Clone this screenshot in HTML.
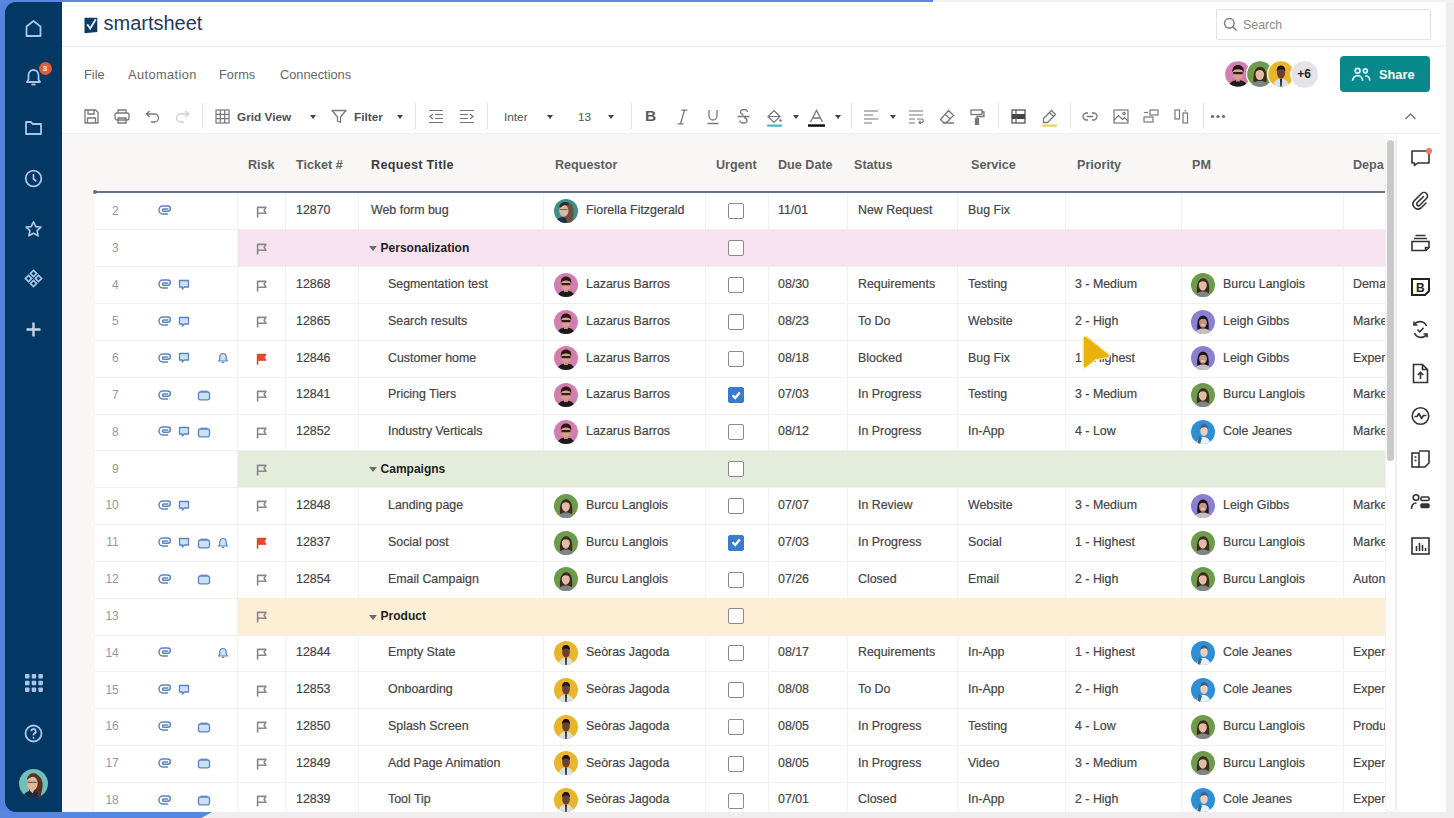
<!DOCTYPE html>
<html><head><meta charset="utf-8">
<style>
*{margin:0;padding:0;box-sizing:border-box}
html,body{width:1454px;height:818px;overflow:hidden}
body{position:relative;background:#efedee;font-family:"Liberation Sans",sans-serif;color:#333}
.abs{position:absolute}
#topband{position:absolute;left:0;top:0;width:933px;height:3px;background:#5a88e0}
#topgrey{position:absolute;left:933px;top:0;width:521px;height:3px;background:#f3f2f2}
#botband{position:absolute;left:0;top:811px;width:214px;height:7px;background:#5886de;clip-path:polygon(0 0,100% 0,94% 100%,0 100%)}
#leftband{position:absolute;left:0;top:0;width:62px;height:818px;background:#5584dc}
#side{position:absolute;left:5px;top:2px;width:60px;height:810px;background:#033764;border-radius:11px 0 0 11px}
#main{position:absolute;left:62px;top:2px;width:1384px;height:810px;background:#fff;overflow:hidden}
.hdrline{position:absolute;left:62px;top:46px;width:1384px;height:1px;background:#ececec}
.menu{position:absolute;top:66.5px;font-size:12.8px;color:#666}
.tb{position:absolute;top:109px}
.tbt{position:absolute;top:110px;font-size:11.8px;color:#505050;font-weight:bold}
.sep{position:absolute;top:103px;width:1px;height:26px;background:#e3e3e3}
.dd{position:absolute;top:115px;width:0;height:0;border-left:3.5px solid transparent;border-right:3.5px solid transparent;border-top:4.5px solid #444}
#gridbg{position:absolute;left:62px;top:134px;width:1331px;height:678px;background:#f8f7f5}
.hd{position:absolute;top:157.5px;font-size:12.6px;font-weight:bold;color:#5e5e5e}
#blueline{position:absolute;left:95px;top:191.3px;width:1289.5px;height:2px;background:#62718f}
#rowsbg{position:absolute;left:95px;top:192px;width:1289.5px;height:620px;background:#fff}
#clip{position:absolute;left:0;top:0;width:1384.5px;height:812px;overflow:hidden}
#clip > *{position:absolute}
.rn{position:absolute;left:62px;width:56.8px;text-align:right;font-size:12px;color:#979797}
.grp{position:absolute;left:237.5px;width:1200px}
.ic{position:absolute}
.flag{left:255.3px;width:12px;height:12px}
.t{position:absolute;font-size:12.4px;color:#454545;white-space:nowrap;-webkit-text-stroke:0.2px #454545}
.gt{position:absolute;left:369px;font-size:12px;font-weight:bold;color:#222;white-space:nowrap}
.tri{display:inline-block;width:0;height:0;border-left:4px solid transparent;border-right:4px solid transparent;border-top:5px solid #6f6a70;margin-right:3.6px;vertical-align:0.5px}
.cb{position:absolute;left:728px;width:16px;height:16px;border:1.5px solid #8a8a8a;border-radius:2px;background:#fff}
.cb.on{background:#3a7cc9;border-color:#3a7cc9}
.cb svg{position:absolute;left:-1.5px;top:-1.5px;width:16px;height:16px}
.av{position:absolute}
.hl{position:absolute;left:95px;width:1300px;height:1px;background:#efefef}
.vl{position:absolute;top:192px;width:1px;height:620px;background:#f1f1f1}
.rpi{position:absolute;left:1410px}
.sbi{position:absolute;left:23px}
</style></head><body>
<svg width="0" height="0" style="position:absolute">
<defs>
<symbol id="att" viewBox="0 0 14 12"><path d="M9.5 10H4.6A3.6 4 0 0 1 4.6 2h5.2a2.6 2.6 0 0 1 0 5.2H5.6a1.1 1.1 0 0 1 0-2.2h4.2" fill="none" stroke="#5a84c0" stroke-width="1.5" stroke-linecap="round"/></symbol>
<symbol id="cmt" viewBox="0 0 12 12"><path d="M1.5 1.5h9v6.5H6.3L4.3 10V8H1.5z" fill="#cfe0f5" stroke="#5a84c0" stroke-width="1.3" stroke-linejoin="round"/></symbol>
<symbol id="prf" viewBox="0 0 14 12"><rect x="1.5" y="3" width="11" height="7.8" rx="1.8" fill="#cfe0f5" stroke="#5a84c0" stroke-width="1.3"/><path d="M3.5 2.2h7" stroke="#5a84c0" stroke-width="1.2"/></symbol>
<symbol id="bel" viewBox="0 0 12 12"><path d="M6 1.5a3.2 3.2 0 0 0-3.2 3.2v2.6L1.6 9h8.8L9.2 7.3V4.7A3.2 3.2 0 0 0 6 1.5z" fill="#cfe0f5" stroke="#5a84c0" stroke-width="1.2" stroke-linejoin="round"/><path d="M4.8 10.4h2.4" stroke="#5a84c0" stroke-width="1.2"/></symbol>
<symbol id="flag" viewBox="0 0 12 12"><path d="M2.6 11.6V0.8M2.6 1.4h8.3L9.1 4.3l1.8 2.9H2.6" fill="none" stroke="#888" stroke-width="1.6" stroke-linejoin="round"/></symbol>
<symbol id="flagr" viewBox="0 0 12 12"><path d="M2.6 11.6V0.8" stroke="#c8503a" stroke-width="1.6"/><path d="M2.6 1.4h8.3L9.1 4.3l1.8 2.9H2.6z" fill="#e04a30" stroke="#e04a30" stroke-width="1.2" stroke-linejoin="round"/></symbol>
<symbol id="face" viewBox="0 0 24 24"></symbol>
<clipPath id="cc"><circle cx="12" cy="12" r="12"/></clipPath>
<g id="faceFF" clip-path="url(#cc)"><path d="M11 3.5c4.5-1 8 2 8.5 7 .4 4 0 9-1.5 13.5H10z" fill="#6e5040"/><ellipse cx="9.8" cy="11.8" rx="4.6" ry="6" fill="#d8b8a0"/><path d="M5 8c1-4 4-5.5 7-5 2 .5 3 2 3 3.5-3-1-6-.5-8 2z" fill="#2a2a2a"/><path d="M2 24c.5-4 3-6 7-6l3 1 1 5z" fill="#1f2d45"/><path d="M6 10.5h7.5" stroke="#555" stroke-width=".9"/></g>
<g id="faceLB" clip-path="url(#cc)"><path d="M3 24c1-4.5 4.5-6.5 9-6.5s8 2 9 6.5z" fill="#1b1b1b"/><rect x="10" y="15" width="4" height="4" fill="#c89078"/><ellipse cx="12" cy="11.5" rx="4.8" ry="5.6" fill="#d9a08a"/><path d="M6.8 10.5c-.5-4.5 2-7 5.2-7s6 2 5.2 7c-.6-2-2.5-3-5.2-3s-4.6 1-5.2 3z" fill="#2a1818"/><path d="M7.5 11.2h9" stroke="#3a1a22" stroke-width="2.2"/></g>
<g id="faceBL" clip-path="url(#cc)"><path d="M6 20c-.5-6 0-14 6-14.5s6.8 8 6 14.5z" fill="#3c2a20"/><path d="M4 24c1-4 4-5.5 8-5.5s7 1.5 8 5.5z" fill="#7d8585"/><ellipse cx="11.8" cy="12.3" rx="4" ry="5.4" fill="#e2bca4"/><path d="M7.8 10.5c0-3.5 1.6-5 4-5s4 1.5 4 5c-1-1.5-2-2.3-4-2.3s-3 .8-4 2.3z" fill="#3c2a20"/></g>
<g id="faceLG" clip-path="url(#cc)"><path d="M6.5 20c-.8-6 0-14.5 5.5-14.5S18.3 14 17.5 20z" fill="#1a1420"/><path d="M4 24c1-4 4-5.5 8-5.5s7 1.5 8 5.5z" fill="#c8c0b8"/><ellipse cx="12" cy="12.6" rx="3.9" ry="5.2" fill="#c49680"/><path d="M8.1 11c0-3.5 1.6-5 3.9-5s3.9 1.5 3.9 5c-1-1.5-2-2.3-3.9-2.3S9.1 9.5 8.1 11z" fill="#1a1420"/><path d="M10.3 15h3.4" stroke="#fff" stroke-width=".9"/></g>
<g id="faceCJ" clip-path="url(#cc)"><path d="M5 24c1.5-5 4-7 7.5-7s6 2 7 7z" fill="#e8f2f8"/><ellipse cx="13" cy="11" rx="3.7" ry="5" fill="#e8d0c0"/><path d="M9.3 9c0-3 1.5-4.8 3.7-4.8s4 1.5 4 4.8c-1-1.2-2-1.8-3.8-1.8S10.2 8 9.3 9z" fill="#4a5a6a"/><path d="M8 16l3 2-2 6H6z" fill="#3a6a80"/></g>
<g id="faceSJ" clip-path="url(#cc)"><path d="M4 24c1-5 4-7.5 8-7.5s7 2.5 8 7.5z" fill="#d8e0e4"/><path d="M11 16.5h2l-.3 7.5h-1.4z" fill="#2a2a30"/><ellipse cx="12" cy="11.2" rx="3.8" ry="5.2" fill="#6a4030"/><path d="M8 9.5c-.3-3.5 1.5-5.5 4-5.5s4.3 2 4 5.5c-1-1.5-2-2-4-2s-3 .5-4 2z" fill="#1a1210"/></g>
<g id="faceME" clip-path="url(#cc)"><path d="M9 5c5-2 10 1 10.5 7 .3 4-1 8-2 12H8z" fill="#5a3020"/><ellipse cx="11" cy="12" rx="4.5" ry="5.8" fill="#e0b898"/><path d="M6.5 9c.5-4 3-5.5 6-5.5 2 0 3.5 1.5 4 3-3-1-6-.5-10 2.5z" fill="#5a3020"/><path d="M3 24c1-4 4-6 7-6l5 1 1 5z" fill="#1a2a40"/><path d="M9 18c1-2 2.5-2 3.5-1l-1 3z" fill="#e8c0a0"/><path d="M7 11h7.5" stroke="#444" stroke-width=".8"/></g>
</defs></svg>

<div id="leftband"></div>
<div id="topband"></div><div id="topgrey"></div>
<div id="botband"></div>
<div id="side"></div>
<div id="main"></div>

<!-- sidebar icons -->
<svg class="abs" style="left:23px;top:18px;width:21px;height:21px" viewBox="0 0 21 21"><path d="M3.5 18V8.5L10.5 3l7 5.5V18z" fill="none" stroke="#a9c6e6" stroke-width="1.8" stroke-linejoin="round"/></svg>
<svg class="abs" style="left:23px;top:67px;width:21px;height:21px" viewBox="0 0 21 21"><path d="M10.5 3a5 5 0 0 0-5 5v4.5L4 15h13l-1.5-2.5V8a5 5 0 0 0-5-5z" fill="none" stroke="#a9c6e6" stroke-width="1.8" stroke-linejoin="round"/><path d="M8.5 17.5h4" stroke="#a9c6e6" stroke-width="1.8"/></svg>
<div class="abs" style="left:38.5px;top:61.5px;width:13px;height:13px;border-radius:50%;background:#df5c38;color:#fff;font-size:8px;font-weight:bold;text-align:center;line-height:13px">3</div>
<svg class="abs" style="left:23px;top:117px;width:21px;height:21px" viewBox="0 0 21 21"><path d="M3 5h5l1.5 2H18v10H3z" fill="none" stroke="#a9c6e6" stroke-width="1.8" stroke-linejoin="round"/></svg>
<svg class="abs" style="left:23px;top:168px;width:21px;height:21px" viewBox="0 0 21 21"><circle cx="10.5" cy="10.5" r="7.8" fill="none" stroke="#a9c6e6" stroke-width="1.8"/><path d="M10.5 6v5l2.8 2.2" fill="none" stroke="#a9c6e6" stroke-width="1.8"/></svg>
<svg class="abs" style="left:23px;top:219px;width:21px;height:21px" viewBox="0 0 21 21"><path d="M10.5 2.8l2.3 4.8 5.1.6-3.8 3.5 1 5.1-4.6-2.6-4.6 2.6 1-5.1-3.8-3.5 5.1-.6z" fill="none" stroke="#a9c6e6" stroke-width="1.7" stroke-linejoin="round"/></svg>
<svg class="abs" style="left:23px;top:268px;width:21px;height:21px" viewBox="0 0 21 21"><g fill="none" stroke="#a9c6e6" stroke-width="1.7"><rect x="8.3" y="3.3" width="4.4" height="4.4" transform="rotate(45 10.5 5.5)"/><rect x="8.3" y="13.3" width="4.4" height="4.4" transform="rotate(45 10.5 15.5)"/><rect x="3.3" y="8.3" width="4.4" height="4.4" transform="rotate(45 5.5 10.5)"/><rect x="13.3" y="8.3" width="4.4" height="4.4" transform="rotate(45 15.5 10.5)"/></g></svg>
<svg class="abs" style="left:23px;top:319px;width:21px;height:21px" viewBox="0 0 21 21"><path d="M10.5 3.5v14M3.5 10.5h14" stroke="#c6d5e6" stroke-width="2.4"/></svg>
<svg class="abs" style="left:24px;top:673px;width:20px;height:20px" viewBox="0 0 20 20"><g fill="#a9c6e6"><rect x="1" y="1" width="4.5" height="4.5" rx=".8"/><rect x="7.7" y="1" width="4.5" height="4.5" rx=".8"/><rect x="14.4" y="1" width="4.5" height="4.5" rx=".8"/><rect x="1" y="7.7" width="4.5" height="4.5" rx=".8"/><rect x="7.7" y="7.7" width="4.5" height="4.5" rx=".8"/><rect x="14.4" y="7.7" width="4.5" height="4.5" rx=".8"/><rect x="1" y="14.4" width="4.5" height="4.5" rx=".8"/><rect x="7.7" y="14.4" width="4.5" height="4.5" rx=".8"/><rect x="14.4" y="14.4" width="4.5" height="4.5" rx=".8"/></g></svg>
<svg class="abs" style="left:23px;top:723px;width:21px;height:21px" viewBox="0 0 21 21"><circle cx="10.5" cy="10.5" r="8" fill="none" stroke="#a9c6e6" stroke-width="1.8"/><path d="M8.2 8.3a2.3 2.3 0 1 1 3.3 2.1c-.7.4-1 .8-1 1.6v.5" fill="none" stroke="#a9c6e6" stroke-width="1.8"/><circle cx="10.5" cy="14.8" r="1" fill="#a9c6e6"/></svg>
<svg class="abs" style="left:19px;top:769px;width:29px;height:29px" viewBox="0 0 24 24"><circle cx="12" cy="12" r="12" fill="#6fc0b8"/><use href="#faceME"/></svg>

<!-- header -->
<div class="hdrline"></div>
<svg class="abs" style="left:84px;top:17px;width:14px;height:17px" viewBox="0 0 14 17"><path d="M0.5 0.7h12.8v14.2L0.5 16.3z" fill="#0e3a66"/><path d="M3.2 7.2l3 4.3 5.6-9.2" fill="none" stroke="#d6e8f8" stroke-width="2"/></svg>
<div class="abs" style="left:103.5px;top:12px;font-size:20px;color:#1e3a5e">smartsheet</div>

<div class="abs" style="left:1215.5px;top:8.5px;width:215px;height:31px;border:1.5px solid #e2e2e2;border-radius:2px;background:#fff"></div>
<svg class="abs" style="left:1223px;top:17px;width:15px;height:15px" viewBox="0 0 15 15"><circle cx="6.3" cy="6.3" r="4.8" fill="none" stroke="#777" stroke-width="1.4"/><path d="M9.8 9.8l3.7 3.7" stroke="#777" stroke-width="1.5"/></svg>
<div class="abs" style="left:1243px;top:18px;font-size:12.4px;color:#8a8a8a">Search</div>

<div class="menu" style="left:84px">File</div>
<div class="menu" style="left:128px;letter-spacing:0.4px">Automation</div>
<div class="menu" style="left:219px">Forms</div>
<div class="menu" style="left:280px">Connections</div>

<!-- collaborators -->
<svg class="abs" style="left:1224px;top:60px;width:28px;height:28px" viewBox="0 0 24 24"><circle cx="12" cy="12" r="12" fill="#fff"/><g transform="translate(1 1) scale(.9167)"><circle cx="12" cy="12" r="12" fill="#d27fb0"/><use href="#faceLB"/></g></svg>
<svg class="abs" style="left:1245.5px;top:60px;width:28px;height:28px" viewBox="0 0 24 24"><circle cx="12" cy="12" r="12" fill="#fff"/><g transform="translate(1 1) scale(.9167)"><circle cx="12" cy="12" r="12" fill="#6e9a4c"/><use href="#faceBL"/></g></svg>
<svg class="abs" style="left:1267px;top:60px;width:28px;height:28px" viewBox="0 0 24 24"><circle cx="12" cy="12" r="12" fill="#fff"/><g transform="translate(1 1) scale(.9167)"><circle cx="12" cy="12" r="12" fill="#e9b52a"/><use href="#faceSJ"/></g></svg>
<div class="abs" style="left:1289.5px;top:59.5px;width:29px;height:29px;border-radius:50%;background:#e4e4e8;border:1.5px solid #fff"></div>
<div class="abs" style="left:1290px;top:67px;width:28px;text-align:center;font-size:12px;font-weight:bold;color:#222">+6</div>

<div class="abs" style="left:1340px;top:56.3px;width:90px;height:35.3px;border-radius:4px;background:#0a898d"></div>
<svg class="abs" style="left:1351px;top:65px;width:21px;height:17px" viewBox="0 0 21 17"><g fill="none" stroke="#d4f5f5" stroke-width="1.7"><circle cx="6.6" cy="5.8" r="2.4"/><path d="M1.6 15.8c0-3 2.2-5.2 5-5.2s5 2.2 5 5.2"/><circle cx="14.3" cy="5.8" r="2"/><path d="M14 10.6c2.6 0 4.8 2 4.8 5"/></g></svg>
<div class="abs" style="left:1379px;top:67px;font-size:12.8px;font-weight:bold;color:#fff">Share</div>

<!-- toolbar -->
<svg class="tb" style="left:84px;width:15px;height:15px" viewBox="0 0 15 15"><g fill="none" stroke="#777" stroke-width="1.3"><path d="M1 1h10.5L14 3.5V14H1z"/><path d="M4 1v4h6V1M3.5 14V9h8v5"/></g></svg>
<svg class="tb" style="left:114px;width:16px;height:15px" viewBox="0 0 16 15"><g fill="none" stroke="#777" stroke-width="1.3"><path d="M4 4V1h8v3"/><rect x="1" y="4" width="14" height="7" rx="2"/><path d="M4 9v5h8V9z"/></g></svg>
<svg class="tb" style="left:145px;width:15px;height:15px" viewBox="0 0 15 15"><g fill="none" stroke="#777" stroke-width="1.3"><path d="M1.5 5h8a4 4 0 0 1 0 8H6"/><path d="M4.5 2L1.5 5l3 3"/></g></svg>
<svg class="tb" style="left:175px;width:15px;height:15px" viewBox="0 0 15 15"><g fill="none" stroke="#cfcfcf" stroke-width="1.3"><path d="M13.5 5h-8a4 4 0 0 0 0 8H9"/><path d="M10.5 2l3 3-3 3"/></g></svg>
<div class="sep" style="left:202px"></div>
<svg class="tb" style="left:215px;width:15px;height:15px" viewBox="0 0 15 15"><g fill="none" stroke="#777" stroke-width="1.2"><rect x="1" y="1" width="13" height="13"/><path d="M1 5.3h13M1 9.7h13M5.3 1v13M9.7 1v13"/></g></svg>
<div class="tbt" style="left:237px">Grid View</div>
<div class="dd" style="left:309.5px"></div>
<svg class="tb" style="left:331px;width:16px;height:15px" viewBox="0 0 16 15"><path d="M1 1.5h14L9.5 8v5.5l-3-1.5V8z" fill="none" stroke="#777" stroke-width="1.3" stroke-linejoin="round"/></svg>
<div class="tbt" style="left:354px">Filter</div>
<div class="dd" style="left:397px"></div>
<div class="sep" style="left:414.5px"></div>
<svg class="tb" style="left:428px;width:16px;height:15px" viewBox="0 0 16 15"><g fill="none" stroke="#777" stroke-width="1.2"><path d="M1 1.5h14M7 5.5h8M7 9.5h8M1 13.5h14M5 5L2 7.5 5 10"/></g></svg>
<svg class="tb" style="left:459px;width:16px;height:15px" viewBox="0 0 16 15"><g fill="none" stroke="#777" stroke-width="1.2"><path d="M1 1.5h14M1 5.5h8M1 9.5h8M1 13.5h14M11 5l3 2.5L11 10"/></g></svg>
<div class="sep" style="left:486.5px"></div>
<div class="tbt" style="left:504px;font-weight:normal">Inter</div>
<div class="dd" style="left:547px"></div>
<div class="tbt" style="left:578px;font-weight:normal">13</div>
<div class="dd" style="left:607.5px"></div>
<div class="sep" style="left:631px"></div>
<div class="tbt" style="left:645px;font-size:15.5px;top:107px;color:#5a5a5a">B</div>
<svg class="tb" style="left:676px;width:13px;height:16px" viewBox="0 0 13 16"><path d="M5.5 1.2h6M1.5 14.8h6M8.5 1.2L4.5 14.8" fill="none" stroke="#777" stroke-width="1.3"/></svg>
<svg class="tb" style="left:706px;width:14px;height:16px" viewBox="0 0 14 16"><g fill="none" stroke="#777" stroke-width="1.3"><path d="M3 1v6a4 4 0 0 0 8 0V1M1.5 14.5h11"/></g></svg>
<svg class="tb" style="left:737px;width:13px;height:16px" viewBox="0 0 13 16"><g fill="none" stroke="#777" stroke-width="1.3"><path d="M10.5 3a3.5 2.5 0 0 0-7 0c0 2 2 2.5 3 2.8M3 11.5a3.5 2.5 0 0 0 7 0c0-2-2-2.5-3-2.8M0.5 7.5h12"/></g></svg>
<svg class="tb" style="left:766px;width:17px;height:18px" viewBox="0 0 17 18"><g fill="none" stroke="#777" stroke-width="1.2"><path d="M8 1.5L14 7.5 8 13.5 2 7.5z M2 7.5h12"/></g><circle cx="14.5" cy="11.5" r="1.3" fill="#777"/><rect x="1" y="15.5" width="15" height="2.2" rx="1" fill="#45b8c5"/></svg>
<div class="dd" style="left:792.5px"></div>
<svg class="tb" style="left:807px;width:19px;height:18px" viewBox="0 0 19 18"><path d="M3.5 13L9.5 1.5 15.5 13M5.8 9h7.4" fill="none" stroke="#777" stroke-width="1.3"/><rect x="1" y="15.3" width="17" height="2.5" fill="#111"/></svg>
<div class="dd" style="left:835px"></div>
<div class="sep" style="left:851px"></div>
<svg class="tb" style="left:863px;width:16px;height:15px" viewBox="0 0 16 15"><path d="M1 2h14M1 6h9M1 10h14M1 14h8" stroke="#777" stroke-width="1.2"/></svg>
<div class="dd" style="left:889.5px"></div>
<svg class="tb" style="left:908px;width:16px;height:15px" viewBox="0 0 16 15"><g fill="none" stroke="#777" stroke-width="1.2"><path d="M1 2h14M1 6h14M1 10h6M1 14h6M9 10h4.5a1.8 1.8 0 0 1 0 3.6H11M12.5 12l-1.5 1.6 1.5 1.4"/></g></svg>
<svg class="tb" style="left:939px;width:16px;height:15px" viewBox="0 0 16 15"><g fill="none" stroke="#777" stroke-width="1.3"><path d="M9.5 1.5l5 5-7 7H4.5l-3-3z M6 5l5 5M4 14h11"/></g></svg>
<svg class="tb" style="left:970px;width:15px;height:16px" viewBox="0 0 15 16"><g fill="none" stroke="#777" stroke-width="1.3"><rect x="1" y="1" width="11" height="4.5"/><path d="M12 3h2v4.5H7v2"/><rect x="5.5" y="9.5" width="3" height="6" fill="#777"/></g></svg>
<div class="sep" style="left:997.5px"></div>
<svg class="tb" style="left:1011px;width:15px;height:15px" viewBox="0 0 15 15"><rect x="1" y="1" width="13" height="13" fill="none" stroke="#555" stroke-width="1.3"/><rect x="1" y="5" width="13" height="5" fill="#444"/><path d="M5 1v13" stroke="#555" stroke-width="1.2"/></svg>
<svg class="tb" style="left:1041px;width:17px;height:18px" viewBox="0 0 17 18"><g fill="none" stroke="#777" stroke-width="1.3"><path d="M10.5 1.5l4 4-8 8h-4v-4z M8.5 3.5l4 4"/></g><rect x="1" y="15.5" width="15" height="2.2" fill="#e8d25a"/></svg>
<div class="sep" style="left:1069.5px"></div>
<svg class="tb" style="left:1082px;width:16px;height:15px" viewBox="0 0 16 15"><g fill="none" stroke="#777" stroke-width="1.3"><path d="M6 4H4.5a3.5 3.5 0 0 0 0 7H6M10 4h1.5a3.5 3.5 0 0 1 0 7H10M5 7.5h6"/></g></svg>
<svg class="tb" style="left:1113px;width:16px;height:15px" viewBox="0 0 16 15"><g fill="none" stroke="#777" stroke-width="1.2"><rect x="1" y="1" width="14" height="13"/><path d="M1 11l4.5-4.5 4 4 2-2 3.5 3.5"/><circle cx="11" cy="4.5" r="1.2"/></g></svg>
<svg class="tb" style="left:1143px;width:16px;height:15px" viewBox="0 0 16 15"><g fill="none" stroke="#777" stroke-width="1.2"><rect x="7" y="1" width="8" height="5"/><rect x="1" y="8" width="9" height="5"/><path d="M1 3.5h4"/></g></svg>
<svg class="tb" style="left:1174px;width:15px;height:15px" viewBox="0 0 15 15"><g fill="none" stroke="#777" stroke-width="1.2"><rect x="1" y="1" width="4.5" height="9"/><rect x="9" y="4" width="4.5" height="10"/><path d="M11.25 1v1.5"/></g></svg>
<div class="sep" style="left:1202.5px"></div>
<svg class="tb" style="left:1210px;width:16px;height:15px" viewBox="0 0 16 15"><g fill="#666"><circle cx="2.5" cy="7.5" r="1.6"/><circle cx="8" cy="7.5" r="1.6"/><circle cx="13.5" cy="7.5" r="1.6"/></g></svg>
<svg class="tb" style="left:1404px;width:13px;height:15px" viewBox="0 0 13 15"><path d="M1.5 10l5-5 5 5" fill="none" stroke="#777" stroke-width="1.4"/></svg>

<!-- grid -->
<div id="gridbg"></div>
<div class="hd" style="left:248px">Risk</div>
<div class="hd" style="left:296px">Ticket #</div>
<div class="hd" style="left:371px;color:#3a3a3a;letter-spacing:0.3px">Request Title</div>
<div class="hd" style="left:555px">Requestor</div>
<div class="hd" style="left:716px">Urgent</div>
<div class="hd" style="left:778px">Due Date</div>
<div class="hd" style="left:854px">Status</div>
<div class="hd" style="left:971px">Service</div>
<div class="hd" style="left:1077px">Priority</div>
<div class="hd" style="left:1192px">PM</div>
<div class="hd" style="left:1353px">Depa</div>
<div id="rowsbg"></div>
<div id="clip">
<div class="vl" style="left:237.0px"></div>
<div class="vl" style="left:284.5px"></div>
<div class="vl" style="left:358.0px"></div>
<div class="vl" style="left:543.0px"></div>
<div class="vl" style="left:705.0px"></div>
<div class="vl" style="left:767.5px"></div>
<div class="vl" style="left:846.8px"></div>
<div class="vl" style="left:957.0px"></div>
<div class="vl" style="left:1064.8px"></div>
<div class="vl" style="left:1180.5px"></div>
<div class="vl" style="left:1342.8px"></div>
<div class="rn" style="top:203.8px">2</div>
<svg class="ic" style="left:157.5px;top:204.4px;width:14px;height:12px" viewBox="0 0 14 12"><use href="#att"/></svg>
<svg class="ic flag" style="top:205.8px" viewBox="0 0 12 12"><use href="#flag"/></svg>
<div class="t" style="left:296px;top:203.2px">12870</div>
<div class="t" style="left:371px;top:203.2px">Web form bug</div>
<svg class="av" style="left:554.2px;top:199.0px;width:24px;height:24px" viewBox="0 0 24 24"><circle cx="12" cy="12" r="12" fill="#3f8f86"/><use href="#faceFF"/></svg>
<div class="t" style="left:586px;top:203.2px">Fiorella Fitzgerald</div>
<div class="cb" style="top:203.3px"></div>
<div class="t" style="left:778px;top:203.2px">11/01</div>
<div class="t" style="left:858px;top:203.2px">New Request</div>
<div class="t" style="left:968px;top:203.2px">Bug Fix</div>
<div class="hl" style="top:229.4px"></div>
<div class="rn" style="top:240.6px">3</div>
<div class="grp" style="top:229.9px;height:36.8px;background:#f6e3ef"></div>
<svg class="ic flag" style="top:242.6px" viewBox="0 0 12 12"><use href="#flag"/></svg>
<div class="gt" style="top:240.8px"><span class="tri"></span>Personalization</div>
<div class="cb" style="top:240.1px"></div>
<div class="hl" style="top:266.2px"></div>
<div class="rn" style="top:277.5px">4</div>
<svg class="ic" style="left:157.5px;top:278.1px;width:14px;height:12px" viewBox="0 0 14 12"><use href="#att"/></svg>
<svg class="ic" style="left:178px;top:278.7px;width:12px;height:12px" viewBox="0 0 12 12"><use href="#cmt"/></svg>
<svg class="ic flag" style="top:279.5px" viewBox="0 0 12 12"><use href="#flag"/></svg>
<div class="t" style="left:296px;top:276.9px">12868</div>
<div class="t" style="left:388px;top:276.9px">Segmentation test</div>
<svg class="av" style="left:554.2px;top:272.7px;width:24px;height:24px" viewBox="0 0 24 24"><circle cx="12" cy="12" r="12" fill="#d27fb0"/><use href="#faceLB"/></svg>
<div class="t" style="left:586px;top:276.9px">Lazarus Barros</div>
<div class="cb" style="top:277.0px"></div>
<div class="t" style="left:778px;top:276.9px">08/30</div>
<div class="t" style="left:858px;top:276.9px">Requirements</div>
<div class="t" style="left:968px;top:276.9px">Testing</div>
<div class="t" style="left:1075px;top:276.9px">3 - Medium</div>
<svg class="av" style="left:1191.0px;top:272.7px;width:24px;height:24px" viewBox="0 0 24 24"><circle cx="12" cy="12" r="12" fill="#6e9a4c"/><use href="#faceBL"/></svg>
<div class="t" style="left:1223px;top:276.9px">Burcu Langlois</div>
<div class="t" style="left:1353px;top:276.9px">Dema</div>
<div class="hl" style="top:303.1px"></div>
<div class="rn" style="top:314.3px">5</div>
<svg class="ic" style="left:157.5px;top:314.9px;width:14px;height:12px" viewBox="0 0 14 12"><use href="#att"/></svg>
<svg class="ic" style="left:178px;top:315.5px;width:12px;height:12px" viewBox="0 0 12 12"><use href="#cmt"/></svg>
<svg class="ic flag" style="top:316.3px" viewBox="0 0 12 12"><use href="#flag"/></svg>
<div class="t" style="left:296px;top:313.7px">12865</div>
<div class="t" style="left:388px;top:313.7px">Search results</div>
<svg class="av" style="left:554.2px;top:309.5px;width:24px;height:24px" viewBox="0 0 24 24"><circle cx="12" cy="12" r="12" fill="#d27fb0"/><use href="#faceLB"/></svg>
<div class="t" style="left:586px;top:313.7px">Lazarus Barros</div>
<div class="cb" style="top:313.8px"></div>
<div class="t" style="left:778px;top:313.7px">08/23</div>
<div class="t" style="left:858px;top:313.7px">To Do</div>
<div class="t" style="left:968px;top:313.7px">Website</div>
<div class="t" style="left:1075px;top:313.7px">2 - High</div>
<svg class="av" style="left:1191.0px;top:309.5px;width:24px;height:24px" viewBox="0 0 24 24"><circle cx="12" cy="12" r="12" fill="#8b7fd0"/><use href="#faceLG"/></svg>
<div class="t" style="left:1223px;top:313.7px">Leigh Gibbs</div>
<div class="t" style="left:1353px;top:313.7px">Marke</div>
<div class="hl" style="top:339.9px"></div>
<div class="rn" style="top:351.1px">6</div>
<svg class="ic" style="left:157.5px;top:351.7px;width:14px;height:12px" viewBox="0 0 14 12"><use href="#att"/></svg>
<svg class="ic" style="left:178px;top:352.3px;width:12px;height:12px" viewBox="0 0 12 12"><use href="#cmt"/></svg>
<svg class="ic" style="left:217px;top:352.3px;width:12px;height:12px" viewBox="0 0 12 12"><use href="#bel"/></svg>
<svg class="ic flag" style="top:353.1px" viewBox="0 0 12 12"><use href="#flagr"/></svg>
<div class="t" style="left:296px;top:350.5px">12846</div>
<div class="t" style="left:388px;top:350.5px">Customer home</div>
<svg class="av" style="left:554.2px;top:346.3px;width:24px;height:24px" viewBox="0 0 24 24"><circle cx="12" cy="12" r="12" fill="#d27fb0"/><use href="#faceLB"/></svg>
<div class="t" style="left:586px;top:350.5px">Lazarus Barros</div>
<div class="cb" style="top:350.6px"></div>
<div class="t" style="left:778px;top:350.5px">08/18</div>
<div class="t" style="left:858px;top:350.5px">Blocked</div>
<div class="t" style="left:968px;top:350.5px">Bug Fix</div>
<div class="t" style="left:1075px;top:350.5px">1 - Highest</div>
<svg class="av" style="left:1191.0px;top:346.3px;width:24px;height:24px" viewBox="0 0 24 24"><circle cx="12" cy="12" r="12" fill="#8b7fd0"/><use href="#faceLG"/></svg>
<div class="t" style="left:1223px;top:350.5px">Leigh Gibbs</div>
<div class="t" style="left:1353px;top:350.5px">Exper</div>
<div class="hl" style="top:376.7px"></div>
<div class="rn" style="top:387.9px">7</div>
<svg class="ic" style="left:157.5px;top:388.5px;width:14px;height:12px" viewBox="0 0 14 12"><use href="#att"/></svg>
<svg class="ic" style="left:197px;top:389.1px;width:14px;height:12px" viewBox="0 0 14 12"><use href="#prf"/></svg>
<svg class="ic flag" style="top:389.9px" viewBox="0 0 12 12"><use href="#flag"/></svg>
<div class="t" style="left:296px;top:387.3px">12841</div>
<div class="t" style="left:388px;top:387.3px">Pricing Tiers</div>
<svg class="av" style="left:554.2px;top:383.1px;width:24px;height:24px" viewBox="0 0 24 24"><circle cx="12" cy="12" r="12" fill="#d27fb0"/><use href="#faceLB"/></svg>
<div class="t" style="left:586px;top:387.3px">Lazarus Barros</div>
<div class="cb on" style="top:387.4px"><svg viewBox="0 0 16 16"><path d="M4.6 8.2l2.6 2.8 4.6-5.6" fill="none" stroke="#f4f9ff" stroke-width="2.4"/></svg></div>
<div class="t" style="left:778px;top:387.3px">07/03</div>
<div class="t" style="left:858px;top:387.3px">In Progress</div>
<div class="t" style="left:968px;top:387.3px">Testing</div>
<div class="t" style="left:1075px;top:387.3px">3 - Medium</div>
<svg class="av" style="left:1191.0px;top:383.1px;width:24px;height:24px" viewBox="0 0 24 24"><circle cx="12" cy="12" r="12" fill="#6e9a4c"/><use href="#faceBL"/></svg>
<div class="t" style="left:1223px;top:387.3px">Burcu Langlois</div>
<div class="t" style="left:1353px;top:387.3px">Marke</div>
<div class="hl" style="top:413.5px"></div>
<div class="rn" style="top:424.8px">8</div>
<svg class="ic" style="left:157.5px;top:425.4px;width:14px;height:12px" viewBox="0 0 14 12"><use href="#att"/></svg>
<svg class="ic" style="left:178px;top:426.0px;width:12px;height:12px" viewBox="0 0 12 12"><use href="#cmt"/></svg>
<svg class="ic" style="left:197px;top:426.0px;width:14px;height:12px" viewBox="0 0 14 12"><use href="#prf"/></svg>
<svg class="ic flag" style="top:426.8px" viewBox="0 0 12 12"><use href="#flag"/></svg>
<div class="t" style="left:296px;top:424.2px">12852</div>
<div class="t" style="left:388px;top:424.2px">Industry Verticals</div>
<svg class="av" style="left:554.2px;top:420.0px;width:24px;height:24px" viewBox="0 0 24 24"><circle cx="12" cy="12" r="12" fill="#d27fb0"/><use href="#faceLB"/></svg>
<div class="t" style="left:586px;top:424.2px">Lazarus Barros</div>
<div class="cb" style="top:424.3px"></div>
<div class="t" style="left:778px;top:424.2px">08/12</div>
<div class="t" style="left:858px;top:424.2px">In Progress</div>
<div class="t" style="left:968px;top:424.2px">In-App</div>
<div class="t" style="left:1075px;top:424.2px">4 - Low</div>
<svg class="av" style="left:1191.0px;top:420.0px;width:24px;height:24px" viewBox="0 0 24 24"><circle cx="12" cy="12" r="12" fill="#2f8fd6"/><use href="#faceCJ"/></svg>
<div class="t" style="left:1223px;top:424.2px">Cole Jeanes</div>
<div class="t" style="left:1353px;top:424.2px">Marke</div>
<div class="hl" style="top:450.4px"></div>
<div class="rn" style="top:461.6px">9</div>
<div class="grp" style="top:450.9px;height:36.8px;background:#e4eddc"></div>
<svg class="ic flag" style="top:463.6px" viewBox="0 0 12 12"><use href="#flag"/></svg>
<div class="gt" style="top:461.8px"><span class="tri"></span>Campaigns</div>
<div class="cb" style="top:461.1px"></div>
<div class="hl" style="top:487.2px"></div>
<div class="rn" style="top:498.4px">10</div>
<svg class="ic" style="left:157.5px;top:499.0px;width:14px;height:12px" viewBox="0 0 14 12"><use href="#att"/></svg>
<svg class="ic" style="left:178px;top:499.6px;width:12px;height:12px" viewBox="0 0 12 12"><use href="#cmt"/></svg>
<svg class="ic flag" style="top:500.4px" viewBox="0 0 12 12"><use href="#flag"/></svg>
<div class="t" style="left:296px;top:497.8px">12848</div>
<div class="t" style="left:388px;top:497.8px">Landing page</div>
<svg class="av" style="left:554.2px;top:493.6px;width:24px;height:24px" viewBox="0 0 24 24"><circle cx="12" cy="12" r="12" fill="#6e9a4c"/><use href="#faceBL"/></svg>
<div class="t" style="left:586px;top:497.8px">Burcu Langlois</div>
<div class="cb" style="top:497.9px"></div>
<div class="t" style="left:778px;top:497.8px">07/07</div>
<div class="t" style="left:858px;top:497.8px">In Review</div>
<div class="t" style="left:968px;top:497.8px">Website</div>
<div class="t" style="left:1075px;top:497.8px">3 - Medium</div>
<svg class="av" style="left:1191.0px;top:493.6px;width:24px;height:24px" viewBox="0 0 24 24"><circle cx="12" cy="12" r="12" fill="#8b7fd0"/><use href="#faceLG"/></svg>
<div class="t" style="left:1223px;top:497.8px">Leigh Gibbs</div>
<div class="t" style="left:1353px;top:497.8px">Marke</div>
<div class="hl" style="top:524.0px"></div>
<div class="rn" style="top:535.3px">11</div>
<svg class="ic" style="left:157.5px;top:535.9px;width:14px;height:12px" viewBox="0 0 14 12"><use href="#att"/></svg>
<svg class="ic" style="left:178px;top:536.5px;width:12px;height:12px" viewBox="0 0 12 12"><use href="#cmt"/></svg>
<svg class="ic" style="left:197px;top:536.5px;width:14px;height:12px" viewBox="0 0 14 12"><use href="#prf"/></svg>
<svg class="ic" style="left:217px;top:536.5px;width:12px;height:12px" viewBox="0 0 12 12"><use href="#bel"/></svg>
<svg class="ic flag" style="top:537.3px" viewBox="0 0 12 12"><use href="#flagr"/></svg>
<div class="t" style="left:296px;top:534.7px">12837</div>
<div class="t" style="left:388px;top:534.7px">Social post</div>
<svg class="av" style="left:554.2px;top:530.5px;width:24px;height:24px" viewBox="0 0 24 24"><circle cx="12" cy="12" r="12" fill="#6e9a4c"/><use href="#faceBL"/></svg>
<div class="t" style="left:586px;top:534.7px">Burcu Langlois</div>
<div class="cb on" style="top:534.8px"><svg viewBox="0 0 16 16"><path d="M4.6 8.2l2.6 2.8 4.6-5.6" fill="none" stroke="#f4f9ff" stroke-width="2.4"/></svg></div>
<div class="t" style="left:778px;top:534.7px">07/03</div>
<div class="t" style="left:858px;top:534.7px">In Progress</div>
<div class="t" style="left:968px;top:534.7px">Social</div>
<div class="t" style="left:1075px;top:534.7px">1 - Highest</div>
<svg class="av" style="left:1191.0px;top:530.5px;width:24px;height:24px" viewBox="0 0 24 24"><circle cx="12" cy="12" r="12" fill="#6e9a4c"/><use href="#faceBL"/></svg>
<div class="t" style="left:1223px;top:534.7px">Burcu Langlois</div>
<div class="t" style="left:1353px;top:534.7px">Marke</div>
<div class="hl" style="top:560.9px"></div>
<div class="rn" style="top:572.1px">12</div>
<svg class="ic" style="left:157.5px;top:572.7px;width:14px;height:12px" viewBox="0 0 14 12"><use href="#att"/></svg>
<svg class="ic" style="left:197px;top:573.3px;width:14px;height:12px" viewBox="0 0 14 12"><use href="#prf"/></svg>
<svg class="ic flag" style="top:574.1px" viewBox="0 0 12 12"><use href="#flag"/></svg>
<div class="t" style="left:296px;top:571.5px">12854</div>
<div class="t" style="left:388px;top:571.5px">Email Campaign</div>
<svg class="av" style="left:554.2px;top:567.3px;width:24px;height:24px" viewBox="0 0 24 24"><circle cx="12" cy="12" r="12" fill="#6e9a4c"/><use href="#faceBL"/></svg>
<div class="t" style="left:586px;top:571.5px">Burcu Langlois</div>
<div class="cb" style="top:571.6px"></div>
<div class="t" style="left:778px;top:571.5px">07/26</div>
<div class="t" style="left:858px;top:571.5px">Closed</div>
<div class="t" style="left:968px;top:571.5px">Email</div>
<div class="t" style="left:1075px;top:571.5px">2 - High</div>
<svg class="av" style="left:1191.0px;top:567.3px;width:24px;height:24px" viewBox="0 0 24 24"><circle cx="12" cy="12" r="12" fill="#6e9a4c"/><use href="#faceBL"/></svg>
<div class="t" style="left:1223px;top:571.5px">Burcu Langlois</div>
<div class="t" style="left:1353px;top:571.5px">Auton</div>
<div class="hl" style="top:597.7px"></div>
<div class="rn" style="top:608.9px">13</div>
<div class="grp" style="top:598.2px;height:36.8px;background:#fdefd3"></div>
<svg class="ic flag" style="top:610.9px" viewBox="0 0 12 12"><use href="#flag"/></svg>
<div class="gt" style="top:609.1px"><span class="tri"></span>Product</div>
<div class="cb" style="top:608.4px"></div>
<div class="hl" style="top:634.5px"></div>
<div class="rn" style="top:645.7px">14</div>
<svg class="ic" style="left:157.5px;top:646.3px;width:14px;height:12px" viewBox="0 0 14 12"><use href="#att"/></svg>
<svg class="ic" style="left:217px;top:646.9px;width:12px;height:12px" viewBox="0 0 12 12"><use href="#bel"/></svg>
<svg class="ic flag" style="top:647.7px" viewBox="0 0 12 12"><use href="#flag"/></svg>
<div class="t" style="left:296px;top:645.1px">12844</div>
<div class="t" style="left:388px;top:645.1px">Empty State</div>
<svg class="av" style="left:554.2px;top:640.9px;width:24px;height:24px" viewBox="0 0 24 24"><circle cx="12" cy="12" r="12" fill="#e9b52a"/><use href="#faceSJ"/></svg>
<div class="t" style="left:586px;top:645.1px">Seòras Jagoda</div>
<div class="cb" style="top:645.2px"></div>
<div class="t" style="left:778px;top:645.1px">08/17</div>
<div class="t" style="left:858px;top:645.1px">Requirements</div>
<div class="t" style="left:968px;top:645.1px">In-App</div>
<div class="t" style="left:1075px;top:645.1px">1 - Highest</div>
<svg class="av" style="left:1191.0px;top:640.9px;width:24px;height:24px" viewBox="0 0 24 24"><circle cx="12" cy="12" r="12" fill="#2f8fd6"/><use href="#faceCJ"/></svg>
<div class="t" style="left:1223px;top:645.1px">Cole Jeanes</div>
<div class="t" style="left:1353px;top:645.1px">Exper</div>
<div class="hl" style="top:671.3px"></div>
<div class="rn" style="top:682.6px">15</div>
<svg class="ic" style="left:157.5px;top:683.2px;width:14px;height:12px" viewBox="0 0 14 12"><use href="#att"/></svg>
<svg class="ic" style="left:178px;top:683.8px;width:12px;height:12px" viewBox="0 0 12 12"><use href="#cmt"/></svg>
<svg class="ic flag" style="top:684.6px" viewBox="0 0 12 12"><use href="#flag"/></svg>
<div class="t" style="left:296px;top:682.0px">12853</div>
<div class="t" style="left:388px;top:682.0px">Onboarding</div>
<svg class="av" style="left:554.2px;top:677.8px;width:24px;height:24px" viewBox="0 0 24 24"><circle cx="12" cy="12" r="12" fill="#e9b52a"/><use href="#faceSJ"/></svg>
<div class="t" style="left:586px;top:682.0px">Seòras Jagoda</div>
<div class="cb" style="top:682.1px"></div>
<div class="t" style="left:778px;top:682.0px">08/08</div>
<div class="t" style="left:858px;top:682.0px">To Do</div>
<div class="t" style="left:968px;top:682.0px">In-App</div>
<div class="t" style="left:1075px;top:682.0px">2 - High</div>
<svg class="av" style="left:1191.0px;top:677.8px;width:24px;height:24px" viewBox="0 0 24 24"><circle cx="12" cy="12" r="12" fill="#2f8fd6"/><use href="#faceCJ"/></svg>
<div class="t" style="left:1223px;top:682.0px">Cole Jeanes</div>
<div class="t" style="left:1353px;top:682.0px">Exper</div>
<div class="hl" style="top:708.2px"></div>
<div class="rn" style="top:719.4px">16</div>
<svg class="ic" style="left:157.5px;top:720.0px;width:14px;height:12px" viewBox="0 0 14 12"><use href="#att"/></svg>
<svg class="ic" style="left:197px;top:720.6px;width:14px;height:12px" viewBox="0 0 14 12"><use href="#prf"/></svg>
<svg class="ic flag" style="top:721.4px" viewBox="0 0 12 12"><use href="#flag"/></svg>
<div class="t" style="left:296px;top:718.8px">12850</div>
<div class="t" style="left:388px;top:718.8px">Splash Screen</div>
<svg class="av" style="left:554.2px;top:714.6px;width:24px;height:24px" viewBox="0 0 24 24"><circle cx="12" cy="12" r="12" fill="#e9b52a"/><use href="#faceSJ"/></svg>
<div class="t" style="left:586px;top:718.8px">Seòras Jagoda</div>
<div class="cb" style="top:718.9px"></div>
<div class="t" style="left:778px;top:718.8px">08/05</div>
<div class="t" style="left:858px;top:718.8px">In Progress</div>
<div class="t" style="left:968px;top:718.8px">Testing</div>
<div class="t" style="left:1075px;top:718.8px">4 - Low</div>
<svg class="av" style="left:1191.0px;top:714.6px;width:24px;height:24px" viewBox="0 0 24 24"><circle cx="12" cy="12" r="12" fill="#6e9a4c"/><use href="#faceBL"/></svg>
<div class="t" style="left:1223px;top:718.8px">Burcu Langlois</div>
<div class="t" style="left:1353px;top:718.8px">Produ</div>
<div class="hl" style="top:745.0px"></div>
<div class="rn" style="top:756.2px">17</div>
<svg class="ic" style="left:157.5px;top:756.8px;width:14px;height:12px" viewBox="0 0 14 12"><use href="#att"/></svg>
<svg class="ic" style="left:197px;top:757.4px;width:14px;height:12px" viewBox="0 0 14 12"><use href="#prf"/></svg>
<svg class="ic flag" style="top:758.2px" viewBox="0 0 12 12"><use href="#flag"/></svg>
<div class="t" style="left:296px;top:755.6px">12849</div>
<div class="t" style="left:388px;top:755.6px">Add Page Animation</div>
<svg class="av" style="left:554.2px;top:751.4px;width:24px;height:24px" viewBox="0 0 24 24"><circle cx="12" cy="12" r="12" fill="#e9b52a"/><use href="#faceSJ"/></svg>
<div class="t" style="left:586px;top:755.6px">Seòras Jagoda</div>
<div class="cb" style="top:755.7px"></div>
<div class="t" style="left:778px;top:755.6px">08/05</div>
<div class="t" style="left:858px;top:755.6px">In Progress</div>
<div class="t" style="left:968px;top:755.6px">Video</div>
<div class="t" style="left:1075px;top:755.6px">3 - Medium</div>
<svg class="av" style="left:1191.0px;top:751.4px;width:24px;height:24px" viewBox="0 0 24 24"><circle cx="12" cy="12" r="12" fill="#6e9a4c"/><use href="#faceBL"/></svg>
<div class="t" style="left:1223px;top:755.6px">Burcu Langlois</div>
<div class="t" style="left:1353px;top:755.6px">Exper</div>
<div class="hl" style="top:781.8px"></div>
<div class="rn" style="top:793.0px">18</div>
<svg class="ic" style="left:157.5px;top:793.6px;width:14px;height:12px" viewBox="0 0 14 12"><use href="#att"/></svg>
<svg class="ic" style="left:197px;top:794.2px;width:14px;height:12px" viewBox="0 0 14 12"><use href="#prf"/></svg>
<svg class="ic flag" style="top:795.0px" viewBox="0 0 12 12"><use href="#flag"/></svg>
<div class="t" style="left:296px;top:792.4px">12839</div>
<div class="t" style="left:388px;top:792.4px">Tool Tip</div>
<svg class="av" style="left:554.2px;top:788.2px;width:24px;height:24px" viewBox="0 0 24 24"><circle cx="12" cy="12" r="12" fill="#e9b52a"/><use href="#faceSJ"/></svg>
<div class="t" style="left:586px;top:792.4px">Seòras Jagoda</div>
<div class="cb" style="top:792.5px"></div>
<div class="t" style="left:778px;top:792.4px">07/01</div>
<div class="t" style="left:858px;top:792.4px">Closed</div>
<div class="t" style="left:968px;top:792.4px">In-App</div>
<div class="t" style="left:1075px;top:792.4px">2 - High</div>
<svg class="av" style="left:1191.0px;top:788.2px;width:24px;height:24px" viewBox="0 0 24 24"><circle cx="12" cy="12" r="12" fill="#2f8fd6"/><use href="#faceCJ"/></svg>
<div class="t" style="left:1223px;top:792.4px">Cole Jeanes</div>
<div class="t" style="left:1353px;top:792.4px">Exper</div>
<div class="hl" style="top:818.6px"></div>
</div>
<div id="blueline"></div>
<div class="abs" style="left:92.5px;top:190.3px;width:4px;height:4px;border-radius:50%;background:#707070"></div>

<!-- scrollbar + right panel -->
<div class="abs" style="left:1384.5px;top:134px;width:12px;height:678px;background:#fdfdfd"></div>
<div class="abs" style="left:62px;top:133px;width:1378px;height:1px;background:#efefef"></div>
<div class="abs" style="left:1385px;top:137px;width:11px;height:675px;border:1px solid #f0f0f0;border-radius:5px"></div>
<div class="abs" style="left:1387px;top:140px;width:7px;height:321px;border-radius:4px;background:#c9c9c9"></div>
<div class="abs" style="left:1396px;top:134px;width:1px;height:678px;background:#eee"></div>

<svg class="rpi" style="top:148px;width:22px;height:19px" viewBox="0 0 22 19"><path d="M2 3h17v12H7.5L4.5 17.5V15H2z" fill="none" stroke="#333" stroke-width="1.6" stroke-linejoin="round"/><circle cx="19" cy="3" r="3" fill="#e8785e"/></svg>
<svg class="rpi" style="top:191px;width:21px;height:20px" viewBox="0 0 21 20"><path d="M13.5 5.5L7 12a1.8 1.8 0 0 0 2.5 2.5l7-7a3.5 3.5 0 0 0-5-5l-7.5 7.5a5 5 0 0 0 7 7l5-5" fill="none" stroke="#333" stroke-width="1.6" stroke-linecap="round"/></svg>
<svg class="rpi" style="top:233px;width:21px;height:20px" viewBox="0 0 21 20"><g fill="none" stroke="#333" stroke-width="1.6"><path d="M5.5 2.5h10M4 5.5h13"/><path d="M2 8.5h17v6l-3 3H2z"/><path d="M15.5 17.5v-3h3.5"/></g></svg>
<svg class="rpi" style="top:277px;width:21px;height:20px" viewBox="0 0 21 20"><path d="M2 2h17v12l-4 4H2z" fill="none" stroke="#222" stroke-width="2"/><text x="6" y="14.5" font-family="Liberation Sans" font-weight="bold" font-size="12" fill="#222">B</text></svg>
<svg class="rpi" style="top:320px;width:21px;height:19px" viewBox="0 0 21 19"><g fill="none" stroke="#333" stroke-width="1.6"><path d="M16.5 6A7 7 0 0 0 4 5M4.5 13A7 7 0 0 0 17 14"/><path d="M4 1.5V5h3.5M17 17.5V14h-3.5M7.5 9.5l2.3 2.3 3.8-4"/></g></svg>
<svg class="rpi" style="top:363px;width:21px;height:21px" viewBox="0 0 21 21"><g fill="none" stroke="#333" stroke-width="1.6"><path d="M3.5 1.5h9l5 5v13h-14z M12.5 1.5v5h5"/><path d="M10.5 16V9.5M7.8 12l2.7-2.7 2.7 2.7"/></g></svg>
<svg class="rpi" style="top:406px;width:21px;height:20px" viewBox="0 0 21 20"><circle cx="10.5" cy="10" r="8.3" fill="none" stroke="#333" stroke-width="1.6"/><path d="M4.5 10.5h2.5l1.8-3 2.8 5 1.8-3h3" fill="none" stroke="#333" stroke-width="1.6" stroke-linejoin="round"/></svg>
<svg class="rpi" style="top:449px;width:21px;height:20px" viewBox="0 0 21 20"><g fill="none" stroke="#333" stroke-width="1.6"><rect x="2" y="4" width="7" height="14"/><path d="M9 2h10v12l-4 4H9"/><path d="M4.5 8h2M4.5 11.5h2"/></g></svg>
<svg class="rpi" style="top:493px;width:21px;height:18px" viewBox="0 0 21 18"><g fill="none" stroke="#333" stroke-width="1.6"><circle cx="6" cy="4.5" r="2.8"/><path d="M1.5 16c0-4 2-6 5-6"/><rect x="11" y="4" width="8" height="3.5" rx="1"/><rect x="11" y="11" width="8" height="3.5" rx="1" fill="#333"/></g></svg>
<svg class="rpi" style="top:536px;width:21px;height:20px" viewBox="0 0 21 20"><g fill="none" stroke="#333" stroke-width="1.6"><rect x="2" y="2" width="17" height="16"/><path d="M6.5 15V10M9.5 15V7M12.5 15V9M15.5 15v-3"/></g></svg>

<!-- cursor -->
<svg class="abs" style="left:1078px;top:332px;width:36px;height:40px" viewBox="0 0 36 40"><path d="M9 4.8Q5.2 3 5.2 7.5L5.2 33.5Q5.3 37.4 8.6 35.1L17.6 27.9 29.6 25.7Q33.6 24.6 30.6 21.9Z" fill="#e9b20c" stroke="#fbeaa5" stroke-width="1.3" stroke-linejoin="round"/></svg>

</body></html>
